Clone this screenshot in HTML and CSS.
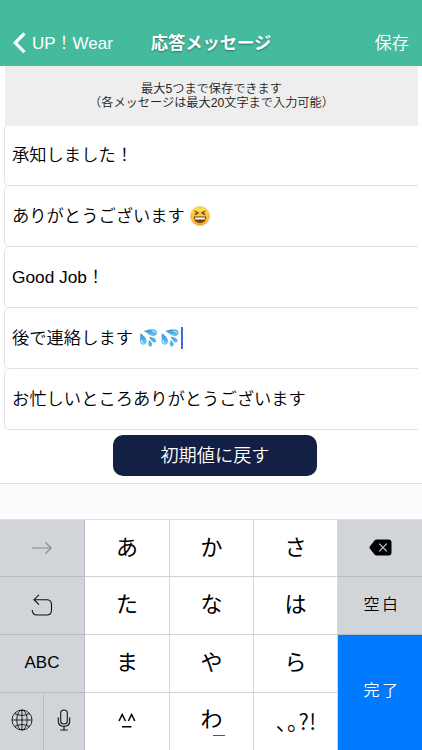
FILE: index.html
```html
<!DOCTYPE html>
<html lang="ja">
<head>
    <meta charset="utf-8">
    <title>応答メッセージ</title>
    <link rel="stylesheet" href="styles.css">
</head>
<body>
    <svg width="0" height="0" class="defs">
        <defs>
            <linearGradient id="drop" x1="0" y1="0" x2="0" y2="1">
                <stop offset="0" stop-color="#2f93d6"/>
                <stop offset="1" stop-color="#6ccbf7"/>
            </linearGradient>
            <linearGradient id="face" x1="0" y1="0" x2="0" y2="1">
                <stop offset="0" stop-color="#ffe35c"/>
                <stop offset="1" stop-color="#f5a92e"/>
            </linearGradient>
            <symbol id="sweat" viewBox="0 0 18 18">
                <path d="M.8 4.2C3.6 6 7.200 9 7 12.200C6.800 14.600 5.200 15.900 3.600 15.800C1.400 15.600.4 13.700.5 11.500C.6 9 .9 6.500.8 4.200Z" fill="url(#drop)"/>
                <path d="M4.200 2C7 .9 11 .1 14 .6C16.600 1 17.800 2.800 17.300 4.700C16.700 6.900 14.200 7.700 12 6.800C9 5.600 7 3.400 4.200 2Z" fill="url(#drop)"/>
                <path d="M9.500 7.800C12.400 8.200 16.200 9.200 16.600 11.400C16.800 12.800 15.800 13.800 14.400 13.600C12.100 13.200 11 10 9.500 7.800Z" fill="url(#drop)"/>
                <path d="M9.600 11.200C11.400 12.500 13 14.300 12.700 16C12.500 17.200 11.500 17.900 10.400 17.700C8 17.200 9.200 13.600 9.600 11.200Z" fill="url(#drop)"/>
                <path d="M2.200 11.200C2 12.700 2.700 14 4 14.200M12.200 2.100C14 2 15.600 2.700 15.700 4" fill="none" stroke="#b9ecff" stroke-width="1.200"/>
            </symbol>
        </defs>
    </svg>

    <header class="navbar">
        <div class="back">
            <svg width="13" height="22" viewBox="0 0 13 22"><path d="M11.400 1.500L2.200 10.800L11.400 20.100" fill="none" stroke="#fff" stroke-width="3.200"/></svg>
            <span>UP！Wear</span>
        </div>
        <h1>応答メッセージ</h1>
        <div class="save">保存</div>
    </header>

    <main class="content">
        <div class="notice">最大5つまで保存できます<br>（各メッセージは最大20文字まで入力可能）</div>
        <div class="messages">
            <div class="message">承知しました！</div>
            <div class="message">ありがとうございます
                <svg class="laugh" width="20" height="20" viewBox="0 0 20 20">
                    <circle cx="10" cy="10" r="9.500" fill="url(#face)" stroke="#e9a02b" stroke-width=".5"/>
                    <path d="M4.700 5L8 7L4.700 8.600M15.300 5L12 7L15.300 8.600" fill="none" stroke="#6b3d0c" stroke-width="1.200"/>
                    <path d="M3.800 10.600H16.200C16 14.600 13.600 17 10 17S4 14.600 3.800 10.600Z" fill="#72400e"/>
                    <path d="M4.900 11.500H15.100L14.500 13.400H5.500Z" fill="#fff"/>
                </svg>
            </div>
            <div class="message">Good Job！</div>
            <div class="message">後で連絡します
                <svg class="sweat" width="19" height="18"><use href="#sweat"/></svg>
                <svg class="sweat next" width="18" height="18"><use href="#sweat"/></svg>
                <span class="caret"></span>
            </div>
            <div class="message">お忙しいところありがとうございます</div>
        </div>
        <button type="button" class="reset">初期値に戻す</button>
    </main>

    <div class="suggestions"></div>

    <div class="keyboard">
        <div class="key gray">
            <svg width="22" height="14" viewBox="0 0 22 14"><path d="M1 7H20M14.500 1.500L20.200 7L14.500 12.500" fill="none" stroke="#85898d" stroke-width="1.100"/></svg>
        </div>
        <div class="key">あ</div>
        <div class="key">か</div>
        <div class="key">さ</div>
        <div class="key gray last">
            <svg width="23" height="17" viewBox="0 0 23 17">
                <path d="M7.500.5H19.500Q22.500.5 22.500 3.500V13.500Q22.500 16.500 19.500 16.500H7.500Q6.500 16.500 5.500 15.500L.8 9.500Q0 8.500.8 7.500L5.500 1.500Q6.500.5 7.500.5Z"/>
                <path d="M10.200 4.700L17.800 12.300M17.800 4.700L10.200 12.300" stroke="#d1d5da" stroke-width="1.100"/>
            </svg>
        </div>

        <div class="key gray">
            <svg width="22" height="22" viewBox="0 0 22 22"><path d="M8 .8L3 5.700L8 10.600M3 5.700H15.500Q20.500 5.700 20.500 10.700V16Q20.500 21 15.500 21H6.200Q1.300 21 1.200 16" fill="none" stroke="#111" stroke-width="1.100"/></svg>
        </div>
        <div class="key">た</div>
        <div class="key">な</div>
        <div class="key">は</div>
        <div class="key gray word">空白</div>

        <div class="key gray abc">ABC</div>
        <div class="key">ま</div>
        <div class="key">や</div>
        <div class="key">ら</div>
        <div class="key done word">完了</div>

        <div class="pair">
            <div class="key gray">
                <svg width="22" height="22" viewBox="0 0 22 22" fill="none" stroke="#111" stroke-width=".9">
                    <circle cx="11" cy="11" r="10"/>
                    <ellipse cx="11" cy="11" rx="5.200" ry="10"/>
                    <path d="M11 1V21M1 11H21M3.500 4.500Q11 8.300 18.500 4.500M3.500 17.500Q11 13.700 18.500 17.500"/>
                </svg>
            </div>
            <div class="key gray">
                <svg width="14" height="22" viewBox="0 0 14 22" fill="none" stroke="#111" stroke-width="1.100">
                    <rect x="3.700" y="1" width="6.600" height="14" rx="3.300"/>
                    <path d="M1.300 8.500V12Q1.300 17.300 7 17.300T12.700 12V8.500M7 17.300V21M3.300 21H10.700"/>
                </svg>
            </div>
        </div>
        <div class="key kaomoji">
            <svg width="18" height="15" viewBox="0 0 18 15"><path d="M1 8L4.200 1.500L7.400 8M10.400 8L13.600 1.500L16.800 8M4 13.800H13.500" fill="none" stroke="#000" stroke-width="1.500"/></svg>
        </div>
        <div class="key wa">わ<span class="bar"></span></div>
        <div class="key punct">、。?!</div>
    </div>
</body>
</html>
```

FILE: styles.css
```css
* { box-sizing: border-box; }
body { margin: 0; height: 750px; overflow: hidden; display: flex; flex-direction: column; background: #fff; color: #000; font-family: "Liberation Sans", "Noto Sans CJK JP", sans-serif; font-weight: 350; }
svg { display: block; flex: none; }
.defs { position: absolute; }

.navbar { height: 66px; padding: 20px 13px 0; display: grid; grid-template-columns: 1fr auto 1fr; align-items: center; background: #44bb9c; color: #fff; }
.back { display: flex; align-items: center; gap: 6px; font-size: 17px; line-height: 22px; white-space: nowrap; }
.back span { padding-top: 1px; }
h1 { margin: 0; font-size: 17.300px; font-weight: 600; line-height: 24px; text-shadow: 0 1px 2px rgba(0, 0, 0, .4); }
.save { text-align: right; font-size: 17.300px; line-height: 24px; }

.content { height: 418px; margin: 0 4px; display: flex; flex-direction: column; }
.notice { height: 60px; flex: none; margin-left: 1px; padding-top: 16px; background: #eee; color: #222; font-size: 12.200px; line-height: 14px; text-align: center; white-space: nowrap; }
.messages { margin-top: -1px; }
.message { height: 61px; padding: 0 0 1px 7px; display: flex; align-items: center; border: 1px solid #e2e2e2; border-width: 0 0 1px 1px; border-radius: 5px 0 0 5px; font-size: 17.300px; line-height: 24px; white-space: nowrap; }
.laugh { margin-left: 5px; }
.sweat { margin-left: 6px; }
.sweat.next { margin-left: 3px; }
.caret { width: 2px; height: 22px; margin-left: 2px; background: #4467d8; }
.reset { width: 204px; height: 41px; flex: none; margin: 5px 0 0 109px; padding: 0 0 3px; border: 0; border-radius: 10px; background: #122044; color: #fff; font: inherit; font-size: 18.200px; }

.suggestions { height: 36px; margin-top: -1px; border-top: 1px solid #dedfe2; background: #fcfcff; }

.keyboard { height: 231px; display: grid; grid-template-columns: 85px 85px 84px 84px 84px; grid-template-rows: 57px 58px 58px 57px; border-top: 1px solid #dcdee2; font-size: 22px; }
.key { display: flex; align-items: center; justify-content: center; padding-bottom: 1px; border-right: 1px solid #d5d7db; border-bottom: 1px solid #cfd1d5; background: #fff; line-height: 30px; font-weight: 400; }
.gray { background: #d1d5da; border-color: #b9bdc3; }
.last { border-right: 0; }
.word { padding-left: 4px; border-right: 0; font-size: 16px; font-weight: 350; letter-spacing: 2.500px; }
.abc { font-size: 17px; }
.done { grid-row: 3 / 5; grid-column: 5; padding-bottom: 4px; background: #007aff; color: #fff; border: 0; }
.pair { display: grid; grid-template-columns: 44px 41px; }
.pair .key, .kaomoji, .wa, .punct { padding-bottom: 3px; border-bottom: 0; }
.wa { position: relative; }
.bar { position: absolute; left: 43px; bottom: 14px; width: 12px; height: 1px; background: #555; }
.punct { padding-left: 1px; font-family: "Noto Sans CJK JP", sans-serif; font-size: 22px; font-weight: 350; font-feature-settings: "halt"; letter-spacing: .500px; }
```
